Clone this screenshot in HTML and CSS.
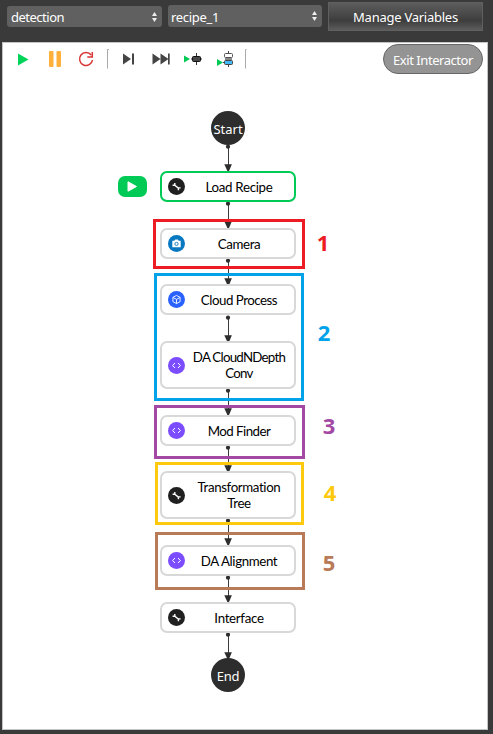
FILE: index.html
```html
<!DOCTYPE html>
<html lang="en">
<head>
<meta charset="utf-8">
<title>Recipe flow</title>
<link rel="stylesheet" href="styles.css">
</head>
<body>
<svg class="defs" width="0" height="0">
  <defs>
    <symbol id="tool" viewBox="0 0 17 17"><circle cx="8.5" cy="8.500" r="8.500" fill="#202020"/><path d="M4.600 7.300h2.200V5.100M6.800 7.200l3.600 2.900M12.600 9.900h-2.200v2.300" fill="none" stroke="#fff" stroke-width="1.400"/></symbol>
    <symbol id="code" viewBox="0 0 17 17"><circle cx="8.500" cy="8.500" r="8.500" fill="#7c4dff"/><path d="M7 6L4.600 8.500 7 11M10 6l2.400 2.500L10 11" fill="none" stroke="#fff" stroke-width="1"/></symbol>
    <symbol id="camera" viewBox="0 0 17 17"><circle cx="8.500" cy="8.500" r="8.500" fill="#0878c1"/><path d="M4.300 5.800h2l.9-1.300h2.600l.9 1.300h2v6.400H4.300z" fill="#fff"/><circle cx="8.500" cy="8.900" r="1.600" fill="#fff" stroke="#0878c1" stroke-width=".9"/></symbol>
    <symbol id="cube" viewBox="0 0 17 17"><circle cx="8.500" cy="8.500" r="8.500" fill="#2962ff"/><path d="M8.500 4.400l3.600 2v4.200l-3.600 2-3.600-2V6.400zM4.900 6.400l3.600 2 3.600-2M8.500 8.400v4.200" fill="none" stroke="#fff" stroke-width=".9"/></symbol>
    <symbol id="link" viewBox="0 0 8 26" overflow="visible"><path d="M4.500 1v20" stroke="#3c3c3c"/><circle cx="4" cy="1.700" r="2.100" fill="#2d2d2d"/><path d="M.3 19.300h7.600L5 26H3.400z" fill="#2d2d2d"/></symbol>
  </defs>
</svg>
<header class="topbar">
  <div class="select"><span>detection</span><svg width="5" height="10" viewBox="0 0 5 10"><path d="M0 4l2.500-4L5 4zM0 6l2.500 4L5 6z" fill="#eee"/></svg></div>
  <div class="select recipe"><span>recipe_1</span><svg width="5" height="10" viewBox="0 0 5 10"><path d="M0 4l2.500-4L5 4zM0 6l2.500 4L5 6z" fill="#eee"/></svg></div>
  <button class="manage">Manage Variables</button>
</header>
<main class="panel">
  <div class="toolbar">
    <svg class="tools" width="250" height="30" viewBox="0 44 250 30">
      <path d="M18 53.500l10.500 6L18 65.500z" fill="#00d35a"/>
      <rect x="49" y="51" width="4.500" height="16" rx="1" fill="#ffb03b"/><rect x="56.500" y="51" width="4.500" height="16" rx="1" fill="#ffb03b"/>
      <path d="M91.200 55A6.500 6.500 0 1 0 92.500 60" fill="none" stroke="#d93434" stroke-width="1.500"/><path d="M92.300 52v5h-5" fill="none" stroke="#d93434" stroke-width="1.500"/>
      <path d="M109 49.500h-1.500v19M246.500 49.500h-1v19" fill="none" stroke="#aaa"/>
      <path d="M123 53.500l8 5.500-8 5.500zM132 53.500h2v11h-2z" fill="#444"/>
      <path d="M152.500 53.500l8 5.500-8 5.500zM160.500 53.500l8 5.500-8 5.500zM168 53.500h1.700v11H168z" fill="#444"/>
      <path d="M184 55.500l6 3.500-6 3.500z" fill="#00ca56"/>
      <path d="M191 59h11M196.500 53v12" stroke="#333"/><rect x="192.500" y="56.500" width="8" height="5" rx="1" fill="#484848" stroke="#111"/>
      <path d="M217 59l6 3.500-6 3.500z" fill="#00ca56"/>
      <path d="M228.500 51v16M223 62.500h10" stroke="#444"/><path d="M225 59h7" stroke="#888" stroke-width="2"/><rect x="224.500" y="53.500" width="8" height="4" rx="1" fill="#fff" stroke="#555"/><rect x="224.500" y="60.500" width="8" height="4" rx="1" fill="#42b9f5" stroke="#444"/>
    </svg>
    <button class="exit">Exit Interactor</button>
  </div>
</main>
<div class="canvas">
  <svg class="links" width="493" height="734" viewBox="0 0 493 734">
    <use href="#link" x="224" y="145" width="8" height="26"/>
    <use href="#link" x="224" y="202" width="8" height="26"/>
    <use href="#link" x="224" y="259" width="8" height="26"/>
    <use href="#link" x="224" y="316" width="8" height="26"/>
    <use href="#link" x="224" y="389" width="8" height="26"/>
    <use href="#link" x="224" y="446" width="8" height="26"/>
    <use href="#link" x="224" y="519" width="8" height="26"/>
    <use href="#link" x="224" y="576" width="8" height="26"/>
    <use href="#link" x="224" y="633" width="8" height="26"/>
  </svg>
  <div class="terminal start">Start</div>
  <div class="run"><svg width="29" height="21" viewBox="0 0 29 21"><path d="M10 5.800l8.500 4.700-8.500 4.700z" fill="#fff" stroke="#fff" stroke-linejoin="round"/></svg></div>
  <div class="node load"><svg><use href="#tool"/></svg><span>Load Recipe</span></div>
  <div class="node cam"><svg><use href="#camera"/></svg><span>Camera</span></div>
  <div class="node cloud"><svg><use href="#cube"/></svg><span>Cloud Process</span></div>
  <div class="node tall conv"><svg><use href="#code"/></svg><span>DA CloudNDepth<br>Conv</span></div>
  <div class="node mod"><svg><use href="#code"/></svg><span>Mod Finder</span></div>
  <div class="node tall tree"><svg><use href="#tool"/></svg><span>Transformation<br>Tree</span></div>
  <div class="node align"><svg><use href="#code"/></svg><span>DA Alignment</span></div>
  <div class="node iface"><svg><use href="#tool"/></svg><span>Interface</span></div>
  <div class="terminal end">End</div>
  <div class="frame f1"></div><div class="frame f2"></div><div class="frame f3"></div><div class="frame f4"></div><div class="frame f5"></div>
  <div class="num n1">1</div><div class="num n2">2</div><div class="num n3">3</div><div class="num n4">4</div><div class="num n5">5</div>
</div>
</body>
</html>
```
FILE: styles.css
```css
* { box-sizing: border-box; }
body { margin: 0; width: 493px; height: 734px; position: relative; overflow: hidden; background: #3a3a3a; font-family: "Noto Sans", "Open Sans", sans-serif; font-size: 13px; color: #fff; }
button { font: inherit; color: inherit; padding: 0; }
.defs { position: absolute; }
.topbar { height: 42px; padding: 2px 0 0 7px; display: flex; align-items: flex-start; gap: 6px; }
.select { width: 155px; height: 21px; margin-top: 4px; padding: 0 5px 0 4px; display: flex; align-items: center; justify-content: space-between; background: #606060; border-radius: 3px; letter-spacing: -.5px; }
.select.recipe { width: 154px; height: 22px; margin-top: 3px; padding-left: 3px; letter-spacing: -.3px; }
.recipe span { padding-top: 2px; }
.manage { width: 155px; height: 29px; border: 1px solid #606060; background: linear-gradient(#5c5c5c, #454545 50%, #3d3d3d 65%, #5c5c5c); letter-spacing: -.25px; }
.panel { width: 486px; height: 688px; margin-left: 2px; background: #fff; border: 1px solid #c4c4c4; }
.toolbar { height: 31px; padding: 1px 4px 0 0; display: flex; justify-content: space-between; }
.tools { margin-left: -3px; }
.exit { width: 100px; height: 30px; border: 1px solid #666; border-radius: 15px; background: #949494; padding-top: 2px; letter-spacing: -.45px; }
.canvas { position: absolute; inset: 0; pointer-events: none; }
.links { position: absolute; left: 0; top: 0; }
.terminal { position: absolute; left: 211px; width: 34px; height: 34px; border-radius: 50%; background: #2d2d2d; line-height: 36px; text-align: center; white-space: nowrap; }
.start { top: 111px; }
.end { top: 658px; letter-spacing: -.3px; }
.run { position: absolute; left: 118px; top: 176px; width: 29px; height: 21px; border-radius: 7px; background: #00ca56; }
.run svg { display: block; }
.node { position: absolute; left: 160px; width: 136px; height: 31px; padding: 0 15px 0 6px; border: 2px solid #d8d8d8; border-radius: 7px; background: #fff; color: #000; display: flex; align-items: center; font-family: Lato, sans-serif; font-size: 13.3px; line-height: 16px; letter-spacing: -.38px; }
.node.tall { height: 48px; }
.node svg { width: 17px; height: 17px; flex: none; }
.node span { flex: 1; margin: 0 -14px 0 0; text-align: center; white-space: nowrap; }
.load { top: 171px; border-color: #00ca56; }
.cam { top: 228px; }
.cloud { top: 284px; letter-spacing: -.48px; }
.conv { top: 341px; letter-spacing: -.75px; }
.mod { top: 415px; letter-spacing: -.55px; }
.tree { top: 471px; }
.align { top: 545px; }
.iface { top: 602px; }
.node.load, .node.iface { letter-spacing: -.3px; }
.frame { position: absolute; border: 3px solid; }
.f1 { left: 153px; top: 219px; width: 152px; height: 50px; color: #ed1c24; }
.f2 { left: 154px; top: 273px; width: 150px; height: 128px; color: #00a2e8; }
.f3 { left: 154px; top: 405px; width: 151px; height: 54px; color: #a349a4; }
.f4 { left: 155px; top: 462px; width: 149px; height: 63px; color: #ffc90e; }
.f5 { left: 155px; top: 532px; width: 150px; height: 58px; color: #b97a57; }
.num { position: absolute; width: 20px; text-align: center; font: bold 22px/30px "Open Sans", sans-serif; }
.n1 { left: 313px; top: 227px; color: #ed1c24; }
.n2 { left: 314px; top: 317px; color: #00a2e8; }
.n3 { left: 319px; top: 410px; color: #a349a4; }
.n4 { left: 320px; top: 477px; color: #ffc90e; }
.n5 { left: 319px; top: 547px; color: #b97a57; }
```
